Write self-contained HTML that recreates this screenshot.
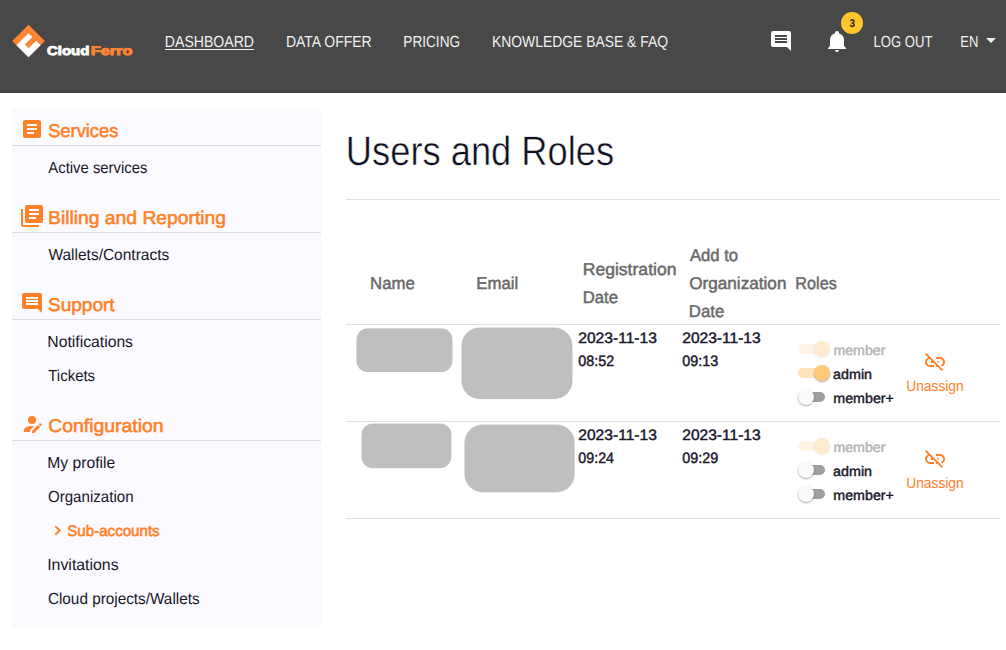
<!DOCTYPE html>
<html lang="en">
<head>
<meta charset="utf-8">
<title>Users and Roles - CloudFerro Dashboard</title>
<style>
*{box-sizing:border-box}
html,body{margin:0;padding:0}
body{text-rendering:geometricPrecision;width:1006px;height:650px;position:relative;overflow:hidden;background:#fff;font-family:"Liberation Sans",sans-serif;}
.t{position:absolute;white-space:nowrap;line-height:1;margin:0;padding:0;transform-origin:0 0;font-weight:400;text-decoration:none;display:block}
header{position:absolute;left:0;top:0;width:1006px;height:93px;background:#484848;box-shadow:inset 0 -1px 0 #404040}
.ic{position:absolute;width:24px;height:24px;display:block}
.ul{position:absolute;left:165px;top:49px;width:89px;height:1px;background:#f1f1f1}
.badge{position:absolute;left:840.9px;top:11.9px;width:22.2px;height:22.2px;border-radius:50%;background:#ffc62e}
aside{position:absolute;left:12px;top:109px;width:308.5px;height:518px;background:#fbfaff}
.sd{position:absolute;left:12px;width:308.5px;height:1px;background:#dcdce1}
.hr{position:absolute;left:346px;width:654px;height:1px;background:#e2e2e2}
.blob{position:absolute;background:#bfbfbf;box-shadow:0 0 .8px #bfbfbf}
.sw{position:absolute;width:34px;height:20px}
.sw i{position:absolute;left:1px;top:5px;width:27px;height:10px;border-radius:5px;display:block}
.sw u{position:absolute;top:2px;width:16px;height:16px;border-radius:50%;display:block;box-shadow:0 1px 2px rgba(0,0,0,.26),0 1px 1px rgba(0,0,0,.10)}
.sw.on i{background:#ffe4b9}.sw.on u{left:17px;background:#ffc97c}
.sw.dis i{background:#fff4e6}.sw.dis u{left:17px;background:#ffebd0;box-shadow:0 1px 2px rgba(0,0,0,.08)}
.sw.off i{background:#9e9e9e}.sw.off u{left:.7px;background:#fafafa}
</style>
</head>
<body>
<header>
  <svg class="ic" style="left:10px;top:22px;width:38px;height:38px" viewBox="0 0 38 38">
    <g transform="translate(18.5 2.8) rotate(45)">
      <rect x="0" y="0" width="23" height="23" fill="#ff8533"/>
      <path d="M5.9 5.9H11.3V16.5H16.7V5.9H23V23H5.9Z" fill="#fff"/>
    </g>
  </svg>
  <nav>
<span class="t" style="left:47px;top:45px;font-size:12.5px;font-weight:700;color:#ffffff;transform:translateX(0.06px) scaleX(1.1939);-webkit-text-stroke:0.9px #fff;">Cloud</span>
<span class="t" style="left:90px;top:45px;font-size:12.5px;font-weight:700;color:#ff8533;transform:translateX(0.76px) scaleX(1.3055);-webkit-text-stroke:0.9px #ff8533;">Ferro</span>
<a class="t" style="left:164px;top:35px;font-size:16px;color:#f1f1f1;transform:translateX(0.86px) scaleX(0.8793);">DASHBOARD</a>
<a class="t" style="left:285px;top:35px;font-size:16px;color:#f1f1f1;transform:translateX(0.96px) scaleX(0.8735);">DATA OFFER</a>
<a class="t" style="left:403px;top:35px;font-size:16px;color:#f1f1f1;transform:translateX(0.29px) scaleX(0.8516);">PRICING</a>
<a class="t" style="left:491px;top:35px;font-size:16px;color:#f1f1f1;transform:translateX(0.98px) scaleX(0.8681);">KNOWLEDGE BASE &amp; FAQ</a>
<a class="t" style="left:873px;top:35px;font-size:16px;color:#f1f1f1;transform:translateX(0.54px) scaleX(0.8186);">LOG OUT</a>
<a class="t" style="left:960px;top:35px;font-size:16px;color:#f1f1f1;transform:translateX(0.25px) scaleX(0.8131);">EN</a>
<b class="t" style="left:849px;top:19px;font-size:11.3px;font-weight:700;color:#222;transform:translateX(0.56px) scaleX(0.8662);z-index:3;">3</b>
  </nav>
  <div class="ul"></div>
  <svg class="ic" style="left:769px;top:28.5px" viewBox="0 0 24 24"><path fill="#fff" d="M18,8H6V6H18V8M18,11H6V9H18V11M18,14H6V12H18V14M22,4A2,2 0 0,0 20,2H4A2,2 0 0,0 2,4V16A2,2 0 0,0 4,18H18L22,22V4Z"/></svg>
  <svg class="ic" style="left:824.8px;top:29px" viewBox="0 0 24 24"><path fill="#fff" d="M21,19V20H3V19L5,17V11C5,7.9 7.03,5.17 10,4.29C10,4.19 10,4.1 10,4A2,2 0 0,1 12,2A2,2 0 0,1 14,4C14,4.1 14,4.19 14,4.29C16.97,5.17 19,7.9 19,11V17L21,19M14,21A2,2 0 0,1 12,23A2,2 0 0,1 10,21"/></svg>
  <div class="badge"></div>
  <svg class="ic" style="left:979px;top:28.3px" viewBox="0 0 24 24"><path fill="#f1f1f1" d="M7,10L12,15L17,10H7Z"/></svg>
</header>

<aside></aside>
<div class="sd" style="top:145px"></div>
<div class="sd" style="top:232px"></div>
<div class="sd" style="top:319px"></div>
<div class="sd" style="top:440px"></div>
<svg class="ic" style="left:20px;top:117px" viewBox="0 0 24 24"><path fill="#ff8128" d="M14,17H7V15H14M17,13H7V11H17M17,9H7V7H17M19,3H5C3.89,3 3,3.89 3,5V19A2,2 0 0,0 5,21H19A2,2 0 0,0 21,19V5C21,3.89 20.1,3 19,3Z"/></svg>
<svg class="ic" style="left:20px;top:204px" viewBox="0 0 24 24"><path fill="#ff8128" fill-rule="evenodd" d="M16,15H9V13H16V15M19,11H9V9H19V11M19,7H9V5H19V7M3,5V21H19V23H3A2,2 0 0,1 1,21V5H3M21,1A2,2 0 0,1 23,3V17C23,18.11 22.11,19 21,19H7A2,2 0 0,1 5,17V3C5,1.89 5.89,1 7,1H21Z"/></svg>
<svg class="ic" style="left:20px;top:291px" viewBox="0 0 24 24"><path fill="#ff8128" d="M18,8H6V6H18V8M18,11H6V9H18V11M18,14H6V12H18V14M22,4A2,2 0 0,0 20,2H4A2,2 0 0,0 2,4V16A2,2 0 0,0 4,18H18L22,22V4Z"/></svg>
<svg class="ic" style="left:20px;top:412px" viewBox="0 0 24 24"><path fill="#ff8128" d="M21.7,13.35L20.7,14.35L18.65,12.3L19.65,11.3C19.86,11.09 20.21,11.09 20.42,11.3L21.7,12.58C21.91,12.79 21.91,13.14 21.7,13.35M12,18.94L18.06,12.88L20.11,14.93L14.06,21H12V18.94M12,14C7.58,14 4,15.79 4,18V20H10V18.11L14,14.11C13.34,14.03 12.67,14 12,14M12,4A4,4 0 0,0 8,8A4,4 0 0,0 12,12A4,4 0 0,0 16,8A4,4 0 0,0 12,4Z"/></svg>
<svg class="ic" style="left:50px;top:520px;width:16px;height:20px" viewBox="0 0 16 20"><path fill="none" stroke="#ff8128" stroke-width="1.9" d="M5.3 6.2L9.8 10.5L5.3 14.8"/></svg>
<section>
<h3 class="t" style="left:48px;top:122px;font-size:18.5px;color:#ff8128;transform:translateX(0.16px) scaleX(0.9892);-webkit-text-stroke:0.55px #ff8128;">Services</h3>
<h3 class="t" style="left:48px;top:209px;font-size:18.5px;color:#ff8128;transform:translateX(0.02px) scaleX(1.0430);-webkit-text-stroke:0.55px #ff8128;">Billing and Reporting</h3>
<h3 class="t" style="left:47px;top:296px;font-size:18.5px;color:#ff8128;transform:translateX(0.94px) scaleX(1.0290);-webkit-text-stroke:0.55px #ff8128;">Support</h3>
<h3 class="t" style="left:48px;top:417px;font-size:18.5px;color:#ff8128;transform:translateX(0.15px) scaleX(1.0493);-webkit-text-stroke:0.55px #ff8128;">Configuration</h3>
<a class="t" style="left:48px;top:161px;font-size:16px;color:#17172a;transform:translateX(0.36px) scaleX(0.9275);">Active services</a>
<a class="t" style="left:48px;top:248px;font-size:16px;color:#17172a;transform:translateX(0.42px) scaleX(0.9682);">Wallets/Contracts</a>
<a class="t" style="left:47px;top:335px;font-size:16px;color:#17172a;transform:translateX(0.32px) scaleX(0.9830);">Notifications</a>
<a class="t" style="left:48px;top:369px;font-size:16px;color:#17172a;transform:translateX(0.27px) scaleX(0.9351);">Tickets</a>
<a class="t" style="left:47px;top:456px;font-size:16px;color:#17172a;transform:translateX(0.32px) scaleX(0.9783);">My profile</a>
<a class="t" style="left:47px;top:490px;font-size:16px;color:#17172a;transform:translateX(0.93px) scaleX(0.9436);">Organization</a>
<a class="t" style="left:67px;top:524px;font-size:15.3px;color:#ff8128;transform:translateX(0.24px) scaleX(0.9883);-webkit-text-stroke:0.6px #ff8128;">Sub-accounts</a>
<a class="t" style="left:47px;top:558px;font-size:16px;color:#17172a;transform:translateX(0.21px) scaleX(0.9908);">Invitations</a>
<a class="t" style="left:47px;top:592px;font-size:16px;color:#17172a;transform:translateX(0.90px) scaleX(0.9566);">Cloud projects/Wallets</a>
</section>

<main>
<div class="hr" style="top:199px"></div>
<div class="hr" style="top:324px"></div>
<div class="hr" style="top:421px"></div>
<div class="hr" style="top:518px"></div>
<svg class="ic" style="left:346px;top:320px;width:240px;height:180px" viewBox="0 0 240 180" fill="#bfbfbf" stroke="#bfbfbf" stroke-opacity=".35" stroke-width=".8">
  <rect x="10.60" y="8.60" width="95.70" height="43.30" rx="11" ry="11"/>
  <rect x="115.65" y="7.70" width="110.65" height="71.20" rx="18" ry="18"/>
  <rect x="15.65" y="103.65" width="89.60" height="44.35" rx="11" ry="11"/>
  <rect x="118.65" y="104.70" width="109.90" height="67.50" rx="18" ry="18"/>
</svg>

<div class="sw dis" style="left:797px;top:339px"><i></i><u></u></div>
<div class="sw on"  style="left:797px;top:363px"><i></i><u></u></div>
<div class="sw off" style="left:797px;top:387px"><i></i><u></u></div>
<div class="sw dis" style="left:797px;top:436px"><i></i><u></u></div>
<div class="sw off" style="left:797px;top:460px"><i></i><u></u></div>
<div class="sw off" style="left:797px;top:484px"><i></i><u></u></div>

<svg class="ic" style="left:923px;top:350px" viewBox="0 0 24 24"><path fill="#ff8128" d="M17,7H13V8.9H17C18.71,8.9 20.1,10.29 20.1,12C20.1,13.43 19.12,14.63 17.79,15L19.25,16.44C20.88,15.61 22,13.95 22,12A5,5 0 0,0 17,7M16,11H13.81L15.81,13H16V11M2,4.27L5.11,7.38C3.29,8.12 2,9.91 2,12A5,5 0 0,0 7,17H11V15.1H7C5.29,15.1 3.9,13.71 3.9,12C3.9,10.41 5.11,9.1 6.66,8.93L8.73,11H8V13H10.73L13,15.27V17H14.73L18.74,21L20,19.74L3.27,3L2,4.27Z"/></svg>
<svg class="ic" style="left:923px;top:447px" viewBox="0 0 24 24"><path fill="#ff8128" d="M17,7H13V8.9H17C18.71,8.9 20.1,10.29 20.1,12C20.1,13.43 19.12,14.63 17.79,15L19.25,16.44C20.88,15.61 22,13.95 22,12A5,5 0 0,0 17,7M16,11H13.81L15.81,13H16V11M2,4.27L5.11,7.38C3.29,8.12 2,9.91 2,12A5,5 0 0,0 7,17H11V15.1H7C5.29,15.1 3.9,13.71 3.9,12C3.9,10.41 5.11,9.1 6.66,8.93L8.73,11H8V13H10.73L13,15.27V17H14.73L18.74,21L20,19.74L3.27,3L2,4.27Z"/></svg>
<h1 class="t" style="left:345px;top:131px;font-size:41px;color:#101020;transform:translateX(0.84px) scaleX(0.8853);-webkit-text-stroke:0.5px #fff;">Users and Roles</h1>
<b class="t" style="left:370px;top:275px;font-size:17px;color:#6a6a6a;transform:translateX(0.03px) scaleX(0.9856);-webkit-text-stroke:0.5px #6a6a6a;">Name</b>
<b class="t" style="left:476px;top:275px;font-size:17px;color:#6a6a6a;transform:translateX(0.33px) scaleX(0.9873);-webkit-text-stroke:0.5px #6a6a6a;">Email</b>
<b class="t" style="left:582px;top:261px;font-size:17px;color:#6a6a6a;transform:translateX(0.69px) scaleX(1.0337);-webkit-text-stroke:0.5px #6a6a6a;">Registration</b>
<b class="t" style="left:582px;top:289px;font-size:17px;color:#6a6a6a;transform:translateX(0.74px) scaleX(0.9817);-webkit-text-stroke:0.5px #6a6a6a;">Date</b>
<b class="t" style="left:689px;top:247px;font-size:17px;color:#6a6a6a;transform:translateX(0.90px) scaleX(0.9813);-webkit-text-stroke:0.5px #6a6a6a;">Add to</b>
<b class="t" style="left:689px;top:275px;font-size:17px;color:#6a6a6a;transform:translateX(0.15px) scaleX(1.0095);-webkit-text-stroke:0.5px #6a6a6a;">Organization</b>
<b class="t" style="left:688px;top:303px;font-size:17px;color:#6a6a6a;transform:translateX(0.83px) scaleX(0.9875);-webkit-text-stroke:0.5px #6a6a6a;">Date</b>
<b class="t" style="left:795px;top:275px;font-size:17px;color:#6a6a6a;transform:translateX(0.37px) scaleX(0.9513);-webkit-text-stroke:0.5px #6a6a6a;">Roles</b>
<span class="t" style="left:578px;top:331px;font-size:15px;color:#17172a;transform:translateX(0.22px) scaleX(1.0402);-webkit-text-stroke:0.45px #17172a;">2023-11-13</span>
<span class="t" style="left:578px;top:354px;font-size:15px;color:#17172a;transform:translateX(0.37px) scaleX(0.9551);-webkit-text-stroke:0.45px #17172a;">08:52</span>
<span class="t" style="left:682px;top:331px;font-size:15px;color:#17172a;transform:translateX(0.22px) scaleX(1.0375);-webkit-text-stroke:0.45px #17172a;">2023-11-13</span>
<span class="t" style="left:682px;top:354px;font-size:15px;color:#17172a;transform:translateX(0.37px) scaleX(0.9539);-webkit-text-stroke:0.45px #17172a;">09:13</span>
<label class="t" style="left:833px;top:344px;font-size:13.8px;color:#b4b4b4;transform:translateX(0.38px) scaleX(1.0292);-webkit-text-stroke:0.45px #b4b4b4;">member</label>
<label class="t" style="left:833px;top:368px;font-size:13.8px;color:#17172a;transform:translateX(0.08px) scaleX(1.0365);-webkit-text-stroke:0.42px #17172a;">admin</label>
<label class="t" style="left:833px;top:392px;font-size:13.8px;color:#17172a;transform:translateX(0.36px) scaleX(1.0310);-webkit-text-stroke:0.42px #17172a;">member+</label>
<a class="t" style="left:906px;top:379px;font-size:15px;color:#ff8128;transform:translateX(0.30px) scaleX(0.9163);">Unassign</a>
<span class="t" style="left:578px;top:428px;font-size:15px;color:#17172a;transform:translateX(0.22px) scaleX(1.0402);-webkit-text-stroke:0.45px #17172a;">2023-11-13</span>
<span class="t" style="left:578px;top:451px;font-size:15px;color:#17172a;transform:translateX(0.37px) scaleX(0.9486);-webkit-text-stroke:0.45px #17172a;">09:24</span>
<span class="t" style="left:682px;top:428px;font-size:15px;color:#17172a;transform:translateX(0.22px) scaleX(1.0375);-webkit-text-stroke:0.45px #17172a;">2023-11-13</span>
<span class="t" style="left:682px;top:451px;font-size:15px;color:#17172a;transform:translateX(0.37px) scaleX(0.9547);-webkit-text-stroke:0.45px #17172a;">09:29</span>
<label class="t" style="left:833px;top:441px;font-size:13.8px;color:#b4b4b4;transform:translateX(0.38px) scaleX(1.0292);-webkit-text-stroke:0.45px #b4b4b4;">member</label>
<label class="t" style="left:833px;top:465px;font-size:13.8px;color:#17172a;transform:translateX(0.08px) scaleX(1.0365);-webkit-text-stroke:0.42px #17172a;">admin</label>
<label class="t" style="left:833px;top:489px;font-size:13.8px;color:#17172a;transform:translateX(0.36px) scaleX(1.0310);-webkit-text-stroke:0.42px #17172a;">member+</label>
<a class="t" style="left:906px;top:476px;font-size:15px;color:#ff8128;transform:translateX(0.30px) scaleX(0.9163);">Unassign</a>
</main>
</body>
</html>
